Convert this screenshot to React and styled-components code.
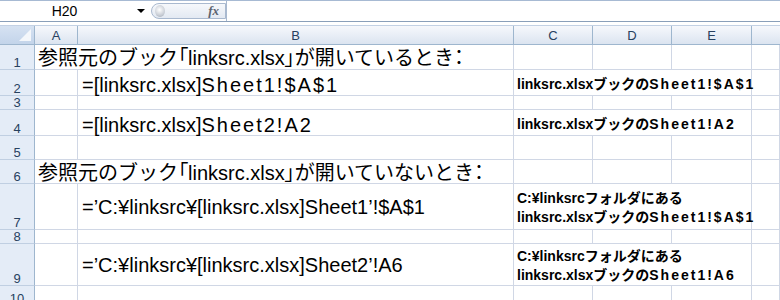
import React from "react";
import styled, { createGlobalStyle } from "styled-components";

const GlobalStyle = createGlobalStyle`
  html, body {
    margin: 0;
    padding: 0;
    background: #ffffff;
  }
  body {
    width: 780px;
    height: 300px;
    overflow: hidden;
    font-family: "Liberation Sans", "Noto Sans CJK JP", sans-serif;
  }
`;

const COLS = "35px 43px 436px 79px 79px 80px 1fr";

// a line is a list of pieces: plain text, or [kind, text]
const rows = [
  {
    n: 1,
    h: 25,
    cells: [
      {
        span: 2,
        size: "big",
        pb: 2,
        lines: [["参照元のブック", ["tight", "「"], "linksrc.xlsx", ["tight", "」"], "が開いているとき", ["tight", "："]]],
      },
      {}, {}, {}, {},
    ],
  },
  {
    n: 2,
    h: 26,
    cells: [
      {},
      { size: "big", pad: 4, pb: 1, lines: [["=[linksrc.xlsx]", ["wide", "Sheet1!$A$1"]]] },
      { span: 3, size: "small", pb: 1, lines: [["linksrc.xlsxブックの", ["wide", "Sheet1!$A$1"]]] },
      {},
    ],
  },
  { n: 3, h: 14, cells: [{}, {}, {}, {}, {}, {}] },
  {
    n: 4,
    h: 26,
    cells: [
      {},
      { size: "big", pad: 4, pb: 1, lines: [["=[linksrc.xlsx]", ["wide", "Sheet2!A2"]]] },
      { span: 3, size: "small", pb: 1, lines: [["linksrc.xlsxブックの", ["wide", "Sheet1!A2"]]] },
      {},
    ],
  },
  { n: 5, h: 24, cells: [{}, {}, {}, {}, {}, {}] },
  {
    n: 6,
    h: 24,
    cells: [
      {
        span: 2,
        size: "big",
        pb: 1,
        lines: [["参照元のブック", ["tight", "「"], "linksrc.xlsx", ["tight", "」"], "が開いていないとき", ["tight", "："]]],
      },
      {}, {}, {}, {},
    ],
  },
  {
    n: 7,
    h: 46,
    cells: [
      {},
      { size: "big", pad: 4, mid: true, lines: [["=’C:¥linksrc¥[linksrc.xlsx]Sheet1’!$A$1"]] },
      {
        span: 3,
        size: "small",
        pb: 2,
        lines: [["C:¥linksrcフォルダにある"], ["linksrc.xlsxブックの", ["wide", "Sheet1!$A$1"]]],
      },
      {},
    ],
  },
  { n: 8, h: 14, cells: [{}, {}, {}, {}, {}, {}] },
  {
    n: 9,
    h: 42,
    cells: [
      {},
      { size: "big", pad: 4, mid: true, lines: [["=’C:¥linksrc¥[linksrc.xlsx]Sheet2’!A6"]] },
      {
        span: 3,
        size: "small",
        lines: [["C:¥linksrcフォルダにある"], ["linksrc.xlsxブックの", ["wide", "Sheet1!A6"]]],
      },
      {},
    ],
  },
  { n: 10, h: 20, cells: [{}, {}, {}, {}, {}, {}] },
];

function Piece({ piece }) {
  if (typeof piece === "string") return piece;
  const [kind, text] = piece;
  if (kind === "tight") return <Tight>{text}</Tight>;
  return <Wide>{text}</Wide>;
}

function App() {
  return (
    <>
      <GlobalStyle />
      <Window>
        <FormulaBar>
          <NameBox>
            <NameText>H20</NameText>
            <DropArrow />
          </NameBox>
          <FxPill>
            <Orb />
            <Fx>fx</Fx>
          </FxPill>
          <FormulaInput />
        </FormulaBar>
        <Spacer />
        <HeaderRow>
          <Corner>
            <svg width="14" height="14" viewBox="0 0 14 14">
              <polygon points="13,1 13,13 1,13" fill="#f4f7fb" />
            </svg>
          </Corner>
          {["A", "B", "C", "D", "E", ""].map((c, i) => (
            <ColHead key={i} $last={i === 5}>
              {c}
            </ColHead>
          ))}
        </HeaderRow>
        {rows.map((row) => (
          <Row key={row.n} $h={row.h}>
            <RowHead>{row.n}</RowHead>
            {row.cells.map((cell, i) => (
              <Cell
                key={i}
                $span={cell.span || 1}
                $size={cell.size}
                $pad={cell.pad || 3}
                $pb={cell.pb || 0}
                $mid={cell.mid}
              >
                {cell.lines && (
                  <Lines>
                    {cell.lines.map((line, j) => (
                      <Line key={j}>
                        {line.map((p, k) => (
                          <Piece key={k} piece={p} />
                        ))}
                      </Line>
                    ))}
                  </Lines>
                )}
              </Cell>
            ))}
          </Row>
        ))}
      </Window>
    </>
  );
}

const Window = styled.div`
  width: 780px;
  height: 300px;
  overflow: hidden;
  background: #ffffff;
`;

const FormulaBar = styled.div`
  display: flex;
  align-items: center;
  height: 20px;
  border-top: 1px solid #a7bad3;
  border-bottom: 1px solid #8a9fb9;
  background: #ffffff;
`;

const NameBox = styled.div`
  width: 148px;
  height: 100%;
  display: flex;
  align-items: center;
`;

const NameText = styled.span`
  flex: 1;
  text-align: center;
  padding-right: 8px;
  font-size: 14px;
  color: #000;
`;

const DropArrow = styled.span`
  width: 0;
  height: 0;
  margin-right: 3px;
  border-left: 4px solid transparent;
  border-right: 4px solid transparent;
  border-top: 4px solid #000;
`;

const FxPill = styled.div`
  width: 75px;
  height: 16px;
  margin-left: 3px;
  border: 1px solid #a9b9cf;
  border-radius: 9px 0 0 9px;
  background: linear-gradient(#f6f8fb, #e3e9f2);
  display: flex;
  align-items: center;
  justify-content: space-between;
  padding: 0 6px 0 3px;
  box-sizing: border-box;
`;

const Orb = styled.span`
  width: 10px;
  height: 12px;
  border-radius: 50%;
  background: radial-gradient(circle at 45% 40%, #ffffff 0%, #c9ced6 60%, #9aa3ae 100%);
`;

const Fx = styled.span`
  font-family: "Liberation Serif", serif;
  font-style: italic;
  font-weight: bold;
  font-size: 13px;
  color: #5c6470;
`;

const FormulaInput = styled.div`
  flex: 1;
  height: 100%;
  border-left: 1px solid #a9b9cf;
  background: #ffffff;
`;

const Spacer = styled.div`
  height: 3px;
  background: #ffffff;
  border-bottom: 1px solid #c3d1e4;
`;

const HeaderRow = styled.div`
  display: grid;
  grid-template-columns: ${COLS};
  height: 19px;
  border-bottom: 1px solid #9eb6ce;
  box-sizing: border-box;
  background: linear-gradient(#f6f8fc, #e6ecf5 60%, #dbe4f0);
`;

const Corner = styled.div`
  display: flex;
  align-items: flex-end;
  justify-content: flex-end;
  padding: 0 2px 2px 0;
  background: linear-gradient(#d6e2f2, #c3d4ea);
  border-right: 1px solid #9eb6ce;
`;

const ColHead = styled.div`
  display: flex;
  align-items: center;
  justify-content: center;
  font-size: 13px;
  color: #27415f;
  border-right: ${(p) => (p.$last ? "none" : "1px solid #9eb6ce")};
`;

const Row = styled.div`
  display: grid;
  grid-template-columns: ${COLS};
  height: ${(p) => p.$h}px;
`;

const RowHead = styled.div`
  display: flex;
  align-items: flex-end;
  justify-content: center;
  padding-bottom: 1px;
  font-size: 13px;
  line-height: 11px;
  color: #27415f;
  background: #e4ecf7;
  border-right: 1px solid #9eb6ce;
  border-bottom: 1px solid #c0cfe2;
  overflow: hidden;
`;

const Cell = styled.div`
  grid-column: span ${(p) => p.$span};
  display: flex;
  align-items: ${(p) => (p.$mid ? "center" : "flex-end")};
  padding-left: ${(p) => p.$pad}px;
  padding-bottom: ${(p) => p.$pb}px;
  border-right: 1px solid #d0d7e5;
  border-bottom: 1px solid #d0d7e5;
  white-space: nowrap;
  font-size: ${(p) => (p.$size === "big" ? "20px" : "14px")};
  line-height: ${(p) => (p.$size === "big" ? "18px" : "19px")};
  font-weight: ${(p) => (p.$size === "small" ? 600 : 400)};
  color: #000;
`;

const Lines = styled.div`
  display: flex;
  flex-direction: column;
`;

const Line = styled.span``;

const Tight = styled.span`
  font-feature-settings: "palt";
`;

const Wide = styled.span`
  letter-spacing: 2px;
`;

export default App;
